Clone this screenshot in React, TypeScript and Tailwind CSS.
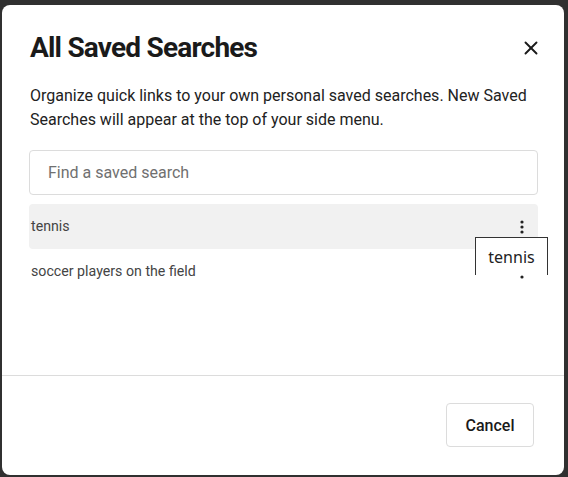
import { X } from "lucide-react";

const rows = ["tennis", "soccer players on the field"];

function Kebab() {
  return (
    <svg width="4" height="14" viewBox="0 0 4 14" className="text-[#222]">
      <circle cx="2" cy="2" r="1.6" fill="currentColor" />
      <circle cx="2" cy="7" r="1.6" fill="currentColor" />
      <circle cx="2" cy="12" r="1.6" fill="currentColor" />
    </svg>
  );
}

export default function App() {
  return (
    <div className="h-[477px] w-[568px] bg-[#303030] pt-[5px] pl-[2px] font-['Roboto',sans-serif]">
      <div className="flex h-[470px] w-[562px] flex-col rounded-lg bg-white">
        {/* Header */}
        <div className="flex items-center justify-between pl-[28px] pr-[21px] pt-[25px]">
          <h2 className="text-[28px] leading-[36px] font-bold tracking-[-0.8px] text-[#1a1a1a]">
            All Saved Searches
          </h2>
          <button className="flex h-6 w-6 items-center justify-center text-[#1a1a1a]">
            <X size={22} strokeWidth={2.1} />
          </button>
        </div>

        {/* Body */}
        <div className="flex-1 pl-[27px] pr-[26px]">
          <p className="mt-[18px] pl-px text-[16px] leading-[24px] text-[#222]">
            Organize quick links to your own personal saved searches. New Saved
            Searches will appear at the top of your side menu.
          </p>
          <div className="mt-[18px] flex h-[45px] items-center rounded border border-[#dcdcdc] px-[18px]">
            <span className="pt-px text-[16px] text-[#707070]">Find a saved search</span>
          </div>

          {/* list clips vertically; extra right room keeps the tooltip visible */}
          <div className="relative mr-[-20px] mt-[9px] h-[76px] overflow-hidden pr-[20px]">
            {rows.map((r, i) => (
              <div
                key={r}
                className={`flex h-[45px] items-center justify-between rounded pl-[2px] pr-[14px] pt-px ${
                  i === 0 ? "bg-[#f1f1f1]" : ""
                }`}
              >
                <span className="text-[14.2px] text-[#444]">{r}</span>
                <Kebab />
              </div>
            ))}
            <div className="absolute left-[446px] top-[33px] h-[38px] w-[73px] border border-b-0 border-[#333] bg-white pt-[7px] text-center font-['Noto_Sans',sans-serif] text-[16px] text-[#222]">
              tennis
            </div>
          </div>
        </div>

        {/* Footer */}
        <div className="flex h-[100px] justify-end border-t border-[#dcdcdc] pr-[30px] pt-[27px]">
          <button className="h-[44px] w-[88px] rounded border border-[#dcdcdc] pt-px text-[16px] font-medium text-[#1a1a1a]">
            Cancel
          </button>
        </div>
      </div>
    </div>
  );
}
